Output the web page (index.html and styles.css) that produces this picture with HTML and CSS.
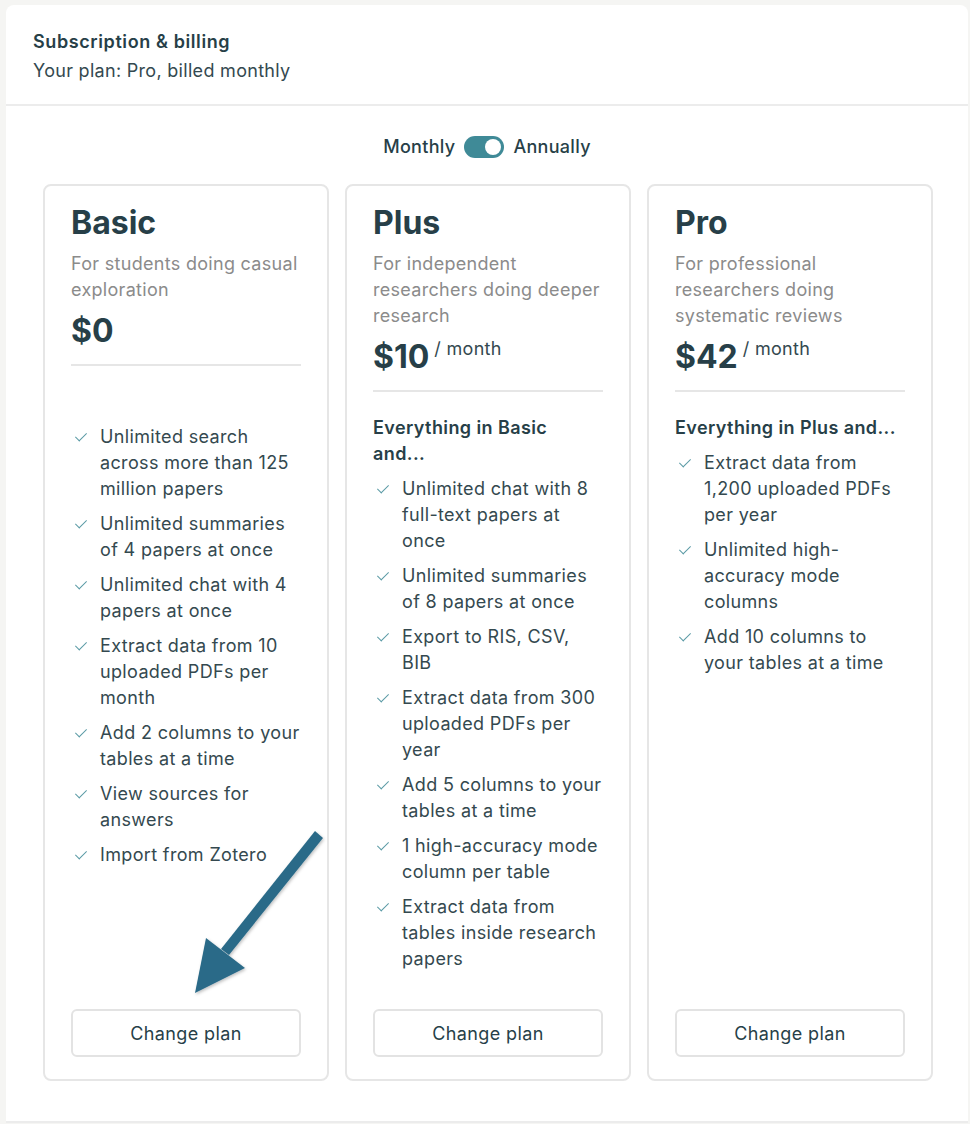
FILE: index.html
```html
<!DOCTYPE html>
<html lang="en">
<head>
<meta charset="utf-8">
<title>Subscription &amp; billing</title>
<link rel="stylesheet" href="styles.css">
</head>
<body>
<div class="panel">
  <header class="panel-head">
    <div class="head-title">Subscription &amp; billing</div>
    <div class="head-sub">Your plan: Pro, billed monthly</div>
  </header>
  <div class="panel-body">
    <div class="toggle-row">
      <span>Monthly</span>
      <span class="switch"><span class="knob"></span></span>
      <span>Annually</span>
    </div>
    <div class="plans">
      <section class="card">
        <h2 class="plan-name">Basic</h2>
        <p class="plan-desc">For students doing casual exploration</p>
        <div class="price"><span class="amount">$0</span></div>
        <hr class="rule">
        <div class="feat-head">&nbsp;</div>
        <ul class="feats">
          <li>Unlimited search across more than 125 million papers</li>
          <li>Unlimited summaries of 4 papers at once</li>
          <li>Unlimited chat with 4 papers at once</li>
          <li>Extract data from 10 uploaded PDFs per month</li>
          <li>Add 2 columns to your tables at a time</li>
          <li>View sources for answers</li>
          <li>Import from Zotero</li>
        </ul>
        <button class="btn">Change plan</button>
      </section>
      <section class="card">
        <h2 class="plan-name">Plus</h2>
        <p class="plan-desc">For independent researchers doing deeper research</p>
        <div class="price"><span class="amount">$10</span><span class="per">/ month</span></div>
        <hr class="rule">
        <div class="feat-head">Everything in Basic and...</div>
        <ul class="feats">
          <li>Unlimited chat with 8 full-text papers at once</li>
          <li>Unlimited summaries of 8 papers at once</li>
          <li>Export to RIS, CSV, BIB</li>
          <li>Extract data from 300 uploaded PDFs per year</li>
          <li>Add 5 columns to your tables at a time</li>
          <li>1 high-accuracy mode column per table</li>
          <li>Extract data from tables inside research papers</li>
        </ul>
        <button class="btn">Change plan</button>
      </section>
      <section class="card">
        <h2 class="plan-name">Pro</h2>
        <p class="plan-desc">For professional researchers doing systematic reviews</p>
        <div class="price"><span class="amount">$42</span><span class="per">/ month</span></div>
        <hr class="rule">
        <div class="feat-head">Everything in Plus and...</div>
        <ul class="feats">
          <li>Extract data from 1,200 uploaded PDFs per year</li>
          <li>Unlimited high-accuracy mode columns</li>
          <li>Add 10 columns to your tables at a time</li>
        </ul>
        <button class="btn">Change plan</button>
      </section>
    </div>
  </div>
</div>
<svg class="arrow" width="970" height="1124" viewBox="0 0 970 1124" aria-hidden="true">
  <defs>
    <filter id="sh" x="-20%" y="-20%" width="140%" height="140%">
      <feDropShadow dx="1" dy="1.5" stdDeviation="1.5" flood-color="#000" flood-opacity="0.25"/>
    </filter>
  </defs>
  <g filter="url(#sh)" fill="#2c6b88" stroke="none">
    <path d="M315 831 L323 838 L229 955 L221 949 Z"/>
    <path d="M195 993 L206 938 L245 968 Z"/>
  </g>
</svg>
</body>
</html>
```

FILE: styles.css
```css
* { box-sizing: border-box; }

html, body {
  margin: 0;
  padding: 0;
}

body {
  background: #f5f5f3;
  font-family: Inter, "Noto Sans", "Liberation Sans", sans-serif;
  color: #2b434b;
  padding: 5px 2px 0 6px;
  min-height: 1124px;
}

.panel {
  background: #ffffff;
  border-radius: 8px 8px 0 0;
  border-bottom: 2px solid #ececec;
}

.panel-head {
  padding: 23px 27px 19px;
  border-bottom: 2px solid #ececec;
}

.head-title {
  font-size: 18px;
  font-weight: 600;
  line-height: 28px;
  color: #273f48;
  letter-spacing: 0.6px;
}

.head-sub {
  font-size: 18px;
  line-height: 28px;
  margin-top: 1px;
  color: #34494f;
  letter-spacing: 0.3px;
}

.panel-body {
  padding: 29px 0 40px;
}

.toggle-row {
  display: flex;
  justify-content: center;
  align-items: center;
  gap: 9px;
  font-size: 18px;
  line-height: 24px;
  font-weight: 500;
  color: #273f48;
  letter-spacing: 0.3px;
  margin-bottom: 25px;
}

.switch {
  position: relative;
  width: 40px;
  height: 22px;
  border-radius: 11px;
  background: #3f8a97;
  display: inline-block;
}

.knob {
  position: absolute;
  top: 3px;
  right: 3px;
  width: 16px;
  height: 16px;
  border-radius: 50%;
  background: #ffffff;
}

.plans {
  display: grid;
  grid-template-columns: repeat(3, 286px);
  gap: 16px;
  justify-content: center;
  padding-left: 2px;
}

.card {
  border: 2px solid #e6e6e6;
  border-radius: 8px;
  padding: 17px 26px 22px;
  display: flex;
  flex-direction: column;
}

.plan-name {
  margin: 0;
  font-size: 32px;
  line-height: 40px;
  font-weight: 700;
  color: #273f48;
}

.plan-desc {
  margin: 8px 0 0;
  font-size: 18px;
  line-height: 26px;
  color: #8b8b8b;
  letter-spacing: 0.3px;
}

.price {
  margin-top: 8px;
  display: flex;
  align-items: flex-start;
  line-height: 40px;
}

.amount {
  font-size: 32px;
  font-weight: 700;
  color: #273f48;
}

.per {
  font-size: 18px;
  line-height: 20px;
  margin-left: 5px;
  margin-top: 2px;
  color: #34494f;
  letter-spacing: 0.3px;
}

.rule {
  margin: 13px 0 0;
  border: 0;
  height: 2px;
  background: #e6e6e6;
}

.feat-head {
  margin-top: 23px;
  font-size: 18px;
  line-height: 26px;
  font-weight: 600;
  color: #273f48;
  letter-spacing: 0.4px;
}

.feats {
  list-style: none;
  margin: 0 0 37px;
  padding: 0;
}

.feats li {
  position: relative;
  margin-top: 9px;
  padding-left: 29px;
  font-size: 18px;
  line-height: 26px;
  color: #34494f;
  letter-spacing: 0.35px;
}

.feats li::before {
  content: "";
  position: absolute;
  left: 7px;
  top: 6px;
  width: 5px;
  height: 10px;
  border-right: 1.5px solid #5a9aa5;
  border-bottom: 1.5px solid #5a9aa5;
  transform: rotate(45deg);
}

.btn {
  margin-top: auto;
  height: 48px;
  width: 100%;
  border: 2px solid #e3e3e3;
  border-radius: 6px;
  background: #ffffff;
  font-family: inherit;
  font-size: 18px;
  font-weight: 400;
  color: #273f48;
  letter-spacing: 0.4px;
  cursor: pointer;
}

.arrow {
  position: absolute;
  left: 0;
  top: 0;
  pointer-events: none;
}
```
